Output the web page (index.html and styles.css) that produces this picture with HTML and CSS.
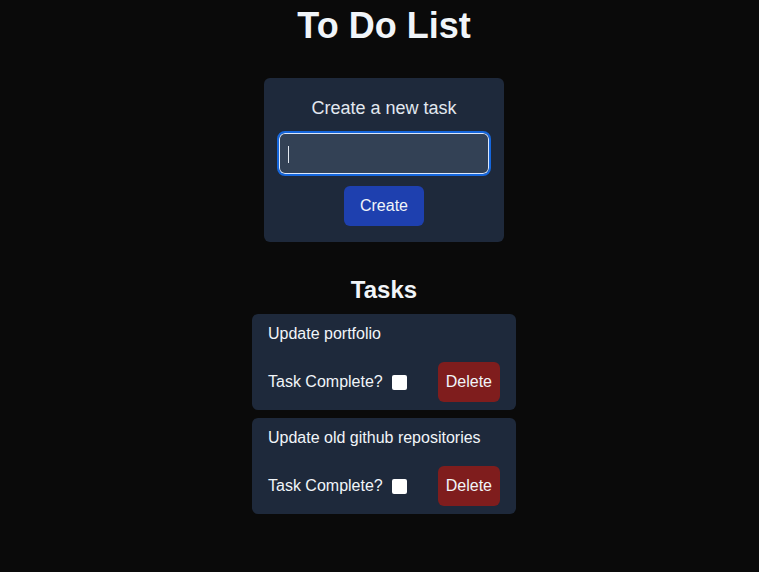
FILE: index.html
```html
<!DOCTYPE html>
<html lang="en">
<head>
<meta charset="utf-8">
<title>To Do List</title>
<link rel="stylesheet" href="styles.css">
</head>
<body>
<main class="app">
  <h1 class="title">To Do List</h1>
  <section class="create-card">
    <h2 class="create-heading">Create a new task</h2>
    <div class="input-wrap">
      <input class="task-input" type="text" aria-label="New task">
      <span class="caret"></span>
    </div>
    <button class="btn btn-create" type="button">Create</button>
  </section>
  <h2 class="tasks-heading">Tasks</h2>
  <ul class="task-list">
    <li class="task-card">
      <p class="task-name">Update portfolio</p>
      <div class="task-row">
        <label class="complete">Task Complete? <input class="check" type="checkbox"></label>
        <button class="btn btn-delete" type="button">Delete</button>
      </div>
    </li>
    <li class="task-card">
      <p class="task-name">Update old github repositories</p>
      <div class="task-row">
        <label class="complete">Task Complete? <input class="check" type="checkbox"></label>
        <button class="btn btn-delete" type="button">Delete</button>
      </div>
    </li>
  </ul>
</main>
</body>
</html>
```

FILE: styles.css
```css
* { box-sizing: border-box; }

html, body {
  margin: 0;
  padding: 0;
  background: #0a0a0a;
  color: #f1f5f9;
  font-family: "Liberation Sans", Arial, sans-serif;
}

.app {
  display: flex;
  flex-direction: column;
  align-items: center;
  padding: 6px 0 0 9px;
}

.title {
  margin: 0;
  font-size: 36px;
  line-height: 40px;
  font-weight: 700;
  color: #f1f5f9;
}

.create-card {
  margin-top: 32px;
  width: 240px;
  padding: 16px 13px;
  background: #1e293b;
  border-radius: 6px;
  display: flex;
  flex-direction: column;
  align-items: center;
}

.create-heading {
  margin: 0;
  font-size: 18px;
  line-height: 28px;
  font-weight: 400;
  color: #e2e8f0;
}

.input-wrap {
  position: relative;
  margin-top: 9px;
  width: 214px;
  height: 45px;
}

.task-input {
  display: block;
  width: 100%;
  height: 100%;
  margin: 0;
  padding: 0 10px;
  background: #334155;
  color: #f1f5f9;
  border: 2px solid #1566dc;
  border-radius: 8px;
  box-shadow: inset 0 0 0 1px #dbe7fb;
  outline: none;
  font: inherit;
}

.caret {
  position: absolute;
  left: 11px;
  top: 15px;
  width: 1px;
  height: 17px;
  background: #e2e8f0;
}

.btn {
  border: none;
  font-family: inherit;
  font-size: 16px;
  line-height: 24px;
  color: #f1f5f9;
  border-radius: 6px;
  cursor: pointer;
}

.btn-create {
  margin-top: 10px;
  padding: 8px 16px;
  background: #1e40af;
}

.tasks-heading {
  margin: 32px 0 0;
  font-size: 24px;
  line-height: 32px;
  font-weight: 700;
  color: #f1f5f9;
}

.task-list {
  list-style: none;
  margin: 8px 0 0;
  padding: 0;
  display: flex;
  flex-direction: column;
  gap: 8px;
}

.task-card {
  width: 264px;
  padding: 8px 16px;
  background: #1e293b;
  border-radius: 6px;
}

.task-name {
  margin: 0;
  font-size: 16px;
  line-height: 24px;
  color: #f1f5f9;
}

.task-row {
  margin-top: 16px;
  display: flex;
  align-items: center;
  justify-content: space-between;
}

.complete {
  display: flex;
  align-items: center;
  font-size: 16px;
  line-height: 24px;
  color: #f1f5f9;
}

.check {
  appearance: none;
  -webkit-appearance: none;
  width: 15px;
  height: 15px;
  margin: 0 0 0 9px;
  background: #ffffff;
  border-radius: 2px;
}

.btn-delete {
  padding: 8px 8px;
  background: #7f1d1d;
}
```
